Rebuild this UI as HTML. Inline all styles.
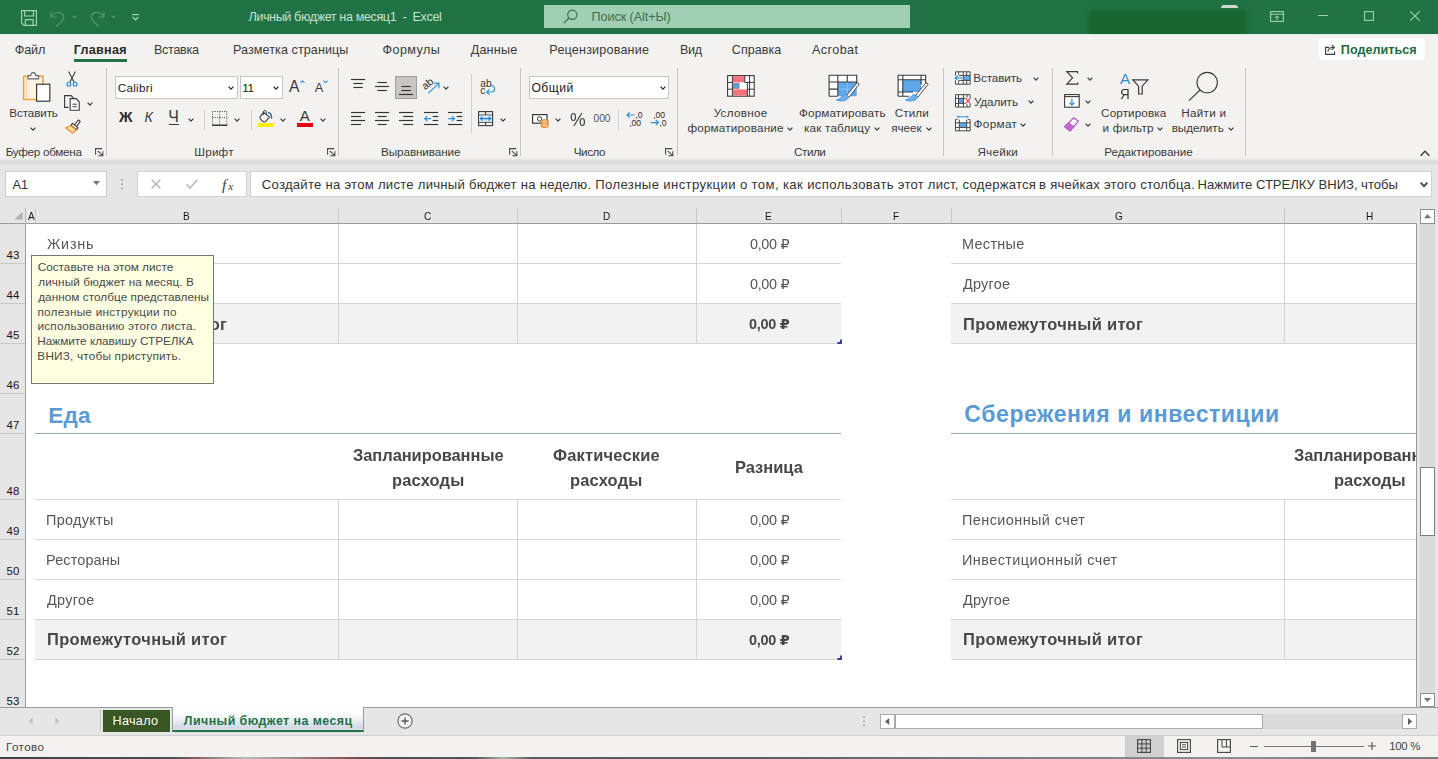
<!DOCTYPE html><html lang="ru"><head><meta charset="utf-8"><title>Личный бюджет на месяц1 - Excel</title><style>
*{box-sizing:border-box;margin:0;padding:0}
html,body{width:1438px;height:759px;overflow:hidden;background:#fff}
body{font-family:"Liberation Sans","DejaVu Sans",sans-serif;color:#3a3a3a}
#app{position:relative;width:1438px;height:759px;overflow:hidden;background:#fff}
.t{position:absolute;white-space:nowrap;line-height:30px;display:block}
.a{position:absolute}
svg{position:absolute;overflow:visible}
.titlebar{left:0;top:0;width:1438px;height:34px;background:#217346;overflow:hidden}
.tline{left:0;top:34px;width:1438px;height:1px;background:#dfece5}
.tabs{left:0;top:34px;width:1438px;height:30px;background:#f3f2f1}
.ribbon{left:0;top:64px;width:1438px;height:96px;background:#f3f2f1}
.rshadow{left:0;top:158px;width:1438px;height:8px;background:linear-gradient(#f0efee,#dcdbda 45%,#e1e1e1 75%,#e6e6e6)}
.fbar{left:0;top:166px;width:1438px;height:40px;background:#e6e6e6}
.box{position:absolute;background:#fff;border:1px solid #c8c6c4}
.vsep{position:absolute;width:1px;background:#c8c6c4}
.colhdr{left:0;top:206px;width:1417px;height:18px;background:#e6e6e6;border-bottom:1px solid #9b9b9b}
.rowhdr{left:0;top:224px;width:26px;height:484px;background:#e6e6e6;border-right:1px solid #9b9b9b}
.grid{left:26px;top:224px;width:1391px;height:483px;background:#fff;overflow:hidden}
.hl{position:absolute;height:1px;background:#d4d4d4}
.vl{position:absolute;width:1px;background:#d4d4d4}
.sub{position:absolute;background:#f2f2f2}
.vscroll{left:1417px;top:206px;width:21px;height:502px;background:#e6e6e6}
.sbtn{position:absolute;background:#fff;border:1px solid #ababab}
.sheettabs{left:0;top:707px;width:1438px;height:29px;background:#e6e6e6;border-top:1px solid #9b9b9b}
.status{left:0;top:735px;width:1438px;height:22px;background:#f3f2f1;border-top:1px solid #d2d0ce}
.bottomstrip{left:0;top:757px;width:1438px;height:2px;background:linear-gradient(90deg,#3c414e,#4a4e58 12%,#8a6a6a 14%,#b9b9b9 17%,#7a4a4a 25%,#4a4f5a 27%,#50555f 33%,#9fb59f 35%,#565b66 37%,#5c606a 55%,#7c7e84 70%,#8e8f93 85%,#77797f)}
</style></head><body><div id="app"><div class="a titlebar"><div class="a" style="left:1089px;top:10px;width:157px;height:30px;background:#17642f;border-radius:3px;filter:blur(2.5px)"></div><div class="a" style="left:1221px;top:5px;width:17px;height:3px;background:#cfd8cf;border-radius:8px 8px 0 0"></div><svg style="left:21.00px;top:10.00px" width="16" height="16" viewBox="0 0 16 16"><path d="M0.6 0.6 H15.4 V15.4 H3 L0.6 13 Z M3.6 0.6 V6 H12.4 V0.6 M4.4 15.4 V9.6 H12 V15.4" fill="none" stroke="#9fd3b4" stroke-width="1.2"/></svg><svg style="left:50.00px;top:10.00px" width="16" height="17" viewBox="0 0 16 17"><path d="M1 1.5 V7 H6.5 M1.5 6.5 C4 2 10 1 13 4.5 C15.5 8 12 12 6 16.5" fill="none" stroke="#4f9a72" stroke-width="1.2"/></svg><svg style="left:71.80px;top:14.70px" width="5.0" height="3.2" viewBox="0 0 5.0 3.2"><path d="M0.6 0.6 L2.50 2.60 L4.40 0.6" fill="none" stroke="#4f9a72" stroke-width="1.10"/></svg><svg style="left:89.00px;top:10.00px" width="16" height="17" viewBox="0 0 16 17"><path d="M15 1.5 V7 H9.5 M14.5 6.5 C12 2 6 1 3 4.5 C0.5 8 4 12 10 16.5" fill="none" stroke="#4f9a72" stroke-width="1.2"/></svg><svg style="left:110.50px;top:14.70px" width="5.0" height="3.2" viewBox="0 0 5.0 3.2"><path d="M0.6 0.6 L2.50 2.60 L4.40 0.6" fill="none" stroke="#4f9a72" stroke-width="1.10"/></svg><svg style="left:132.00px;top:14.00px" width="7" height="7" viewBox="0 0 7 7"><path d="M0 0.6 H7" stroke="#9fd3b4" stroke-width="1.2"/><path d="M0.6 3 L3.5 5.8 L6.4 3" fill="none" stroke="#9fd3b4" stroke-width="1.2"/></svg><span class="t" style="left:248.39px;top:2px;font-size:12.60px;color:#c6e0d1;letter-spacing:-0.388px;white-space:pre;">Личный бюджет на месяц1  -  Excel</span><div class="a" style="left:544px;top:5px;width:366px;height:23px;background:#a0cfb5"></div><svg style="left:563.00px;top:9.00px" width="15" height="15" viewBox="0 0 15 15"><circle cx="9.3" cy="5.7" r="4.6" fill="none" stroke="#3a6e52" stroke-width="1.2"/><path d="M6 9 L0.8 14.2" stroke="#3a6e52" stroke-width="1.2"/></svg><span class="t" style="left:591.48px;top:2px;font-size:12.60px;color:#3a6e52;letter-spacing:-0.057px;">Поиск (Alt+Ы)</span><svg style="left:1269.50px;top:10.50px" width="14" height="11" viewBox="0 0 14 11"><rect x="0.6" y="0.6" width="12.8" height="9.8" fill="none" stroke="#9fd3b4" stroke-width="1.1"/><path d="M0.6 3.2 H13.4 M7 9.2 V5 M4.8 7 L7 4.8 L9.2 7" fill="none" stroke="#9fd3b4" stroke-width="1"/></svg><div class="a" style="left:1318px;top:15px;width:10px;height:1.2px;background:#9fd3b4"></div><svg style="left:1363.50px;top:11.00px" width="10" height="10" viewBox="0 0 10 10"><rect x="0.6" y="0.6" width="8.8" height="8.8" fill="none" stroke="#9fd3b4" stroke-width="1.1"/></svg><svg style="left:1409.50px;top:11.00px" width="10" height="10" viewBox="0 0 10 10"><path d="M0.3 0.3 L9.7 9.7 M9.7 0.3 L0.3 9.7" stroke="#9fd3b4" stroke-width="1.1"/></svg></div><div class="a tabs"></div><span class="t" style="left:14.77px;top:35px;font-size:12.60px;letter-spacing:-0.123px;">Файл</span><span class="t" style="left:73.66px;top:35px;font-size:12.60px;font-weight:700;color:#2b2b2b;letter-spacing:0.301px;">Главная</span><div class="a" style="left:74px;top:59px;width:53px;height:3px;background:#217346"></div><span class="t" style="left:153.97px;top:35px;font-size:12.60px;letter-spacing:-0.296px;">Вставка</span><span class="t" style="left:232.97px;top:35px;font-size:12.60px;letter-spacing:0.072px;">Разметка страницы</span><span class="t" style="left:382.57px;top:35px;font-size:12.60px;letter-spacing:0.398px;">Формулы</span><span class="t" style="left:470.71px;top:35px;font-size:12.60px;letter-spacing:0.190px;">Данные</span><span class="t" style="left:549.37px;top:35px;font-size:12.60px;letter-spacing:0.180px;">Рецензирование</span><span class="t" style="left:679.97px;top:35px;font-size:12.60px;letter-spacing:-0.274px;">Вид</span><span class="t" style="left:731.86px;top:35px;font-size:12.60px;letter-spacing:0.006px;">Справка</span><span class="t" style="left:811.98px;top:35px;font-size:12.61px;letter-spacing:0.441px;">Acrobat</span><div class="a" style="left:1318px;top:38px;width:107px;height:22px;background:#fff;border-radius:3px;box-shadow:0 0 1px #d0d0d0"></div><svg style="left:1325.00px;top:43.50px" width="11.5" height="11" viewBox="0 0 11.5 11"><path d="M4 3.4 H0.6 V10.4 H9.6 V7.4" fill="none" stroke="#3a3a3a" stroke-width="1.1"/><path d="M2.8 7.6 C3.4 4.6 5.6 3.2 8.2 3.2 M6.6 0.8 L9.4 3.2 L6.6 5.8" fill="none" stroke="#3a3a3a" stroke-width="1.1"/></svg><span class="t" style="left:1340.86px;top:35px;font-size:12.60px;font-weight:700;color:#1e6b41;letter-spacing:0.025px;">Поделиться</span><div class="a tline"></div><div class="a ribbon"></div><div class="a rshadow"></div><svg style="left:22.00px;top:71.00px" width="29" height="31" viewBox="0 0 29 31"><path d="M1.6 5.2 H21 V28.6 H1.6 Z" fill="#fdf3e3" stroke="#e9a13b" stroke-width="1.5"/><path d="M3.4 7 H5.6 V26.8 H3.4 Z" fill="#fbdcb0"/><path d="M6 7.9 V4.6 H8.8 C8.8 0.6 13.8 0.6 13.8 4.6 H16.6 V7.9 Z" fill="#f8f8f8" stroke="#666" stroke-width="1.1"/><rect x="14.6" y="13.2" width="13.2" height="17" fill="#fff" stroke="#3a3a3a" stroke-width="1.2"/></svg><span class="t" style="left:9.34px;top:98px;font-size:11.70px;letter-spacing:-0.130px;">Вставить</span><svg style="left:30.00px;top:126.70px" width="6.0" height="3.8" viewBox="0 0 6.0 3.8"><path d="M0.6 0.6 L3.00 3.20 L5.40 0.6" fill="none" stroke="#3a3a3a" stroke-width="1.20"/></svg><svg style="left:66.00px;top:71.00px" width="12" height="16" viewBox="0 0 12 16"><path d="M2.6 0.5 L8.2 11.5 M9.4 0.5 L3.8 11.5" fill="none" stroke="#3a3a3a" stroke-width="1.1"/><circle cx="2.9" cy="13.2" r="1.9" fill="none" stroke="#2f8fd8" stroke-width="1.2"/><circle cx="9.1" cy="13.2" r="1.9" fill="none" stroke="#2f8fd8" stroke-width="1.2"/></svg><svg style="left:64.00px;top:95.00px" width="16" height="16" viewBox="0 0 16 16"><path d="M4.6 12.4 H0.6 V0.6 H7 L9.6 3.2" fill="none" stroke="#3a3a3a" stroke-width="1.1"/><path d="M6.2 3.6 H12 L15.2 6.8 V15.2 H6.2 Z" fill="#fff" stroke="#3a3a3a" stroke-width="1.1"/><path d="M8.6 9.2 H12.8 M8.6 11.8 H12.8" stroke="#3a3a3a" stroke-width="1"/></svg><svg style="left:86.50px;top:101.70px" width="6.0" height="3.8" viewBox="0 0 6.0 3.8"><path d="M0.6 0.6 L3.00 3.20 L5.40 0.6" fill="none" stroke="#3a3a3a" stroke-width="1.20"/></svg><svg style="left:64.50px;top:119.00px" width="16" height="15" viewBox="0 0 16 15"><path d="M9.5 6.2 L13.4 1 L15.2 2.4 L11.6 7.8" fill="#fff" stroke="#3a3a3a" stroke-width="1.1"/><path d="M7.4 4.4 L13 8.6 L11.6 10.6 L6 6.4 Z" fill="#f8f8f8" stroke="#3a3a3a" stroke-width="1.1"/><path d="M5.4 6.6 L11.2 11 L7.6 14.2 L0.8 8.8 Z" fill="#fbd9a5" stroke="#e8912d" stroke-width="1.2"/></svg><span class="t" style="left:5.74px;top:137px;font-size:11.70px;letter-spacing:-0.287px;">Буфер обмена</span><svg style="left:94.60px;top:147.80px" width="9" height="9" viewBox="0 0 9 9"><path d="M0.6 6.8 V0.6 H7.2" fill="none" stroke="#4a4a4a" stroke-width="1.1"/><path d="M2.8 2.8 L7.6 7.6 M7.8 3.2 V7.8 H3.2" fill="none" stroke="#4a4a4a" stroke-width="1.1"/></svg><div class="vsep" style="left:106.0px;top:68px;height:88px"></div><div class="box" style="left:115px;top:76px;width:123px;height:23px"></div><span class="t" style="left:117.71px;top:73px;font-size:11.70px;color:#222;letter-spacing:0.276px;">Calibri</span><svg style="left:228.00px;top:86.40px" width="6.0" height="3.8" viewBox="0 0 6.0 3.8"><path d="M0.6 0.6 L3.00 3.20 L5.40 0.6" fill="none" stroke="#222" stroke-width="1.20"/></svg><div class="box" style="left:240px;top:76px;width:43px;height:23px"></div><span class="t" style="left:242.30px;top:73px;font-size:11.80px;color:#222;letter-spacing:-0.6px;">11</span><svg style="left:273.00px;top:86.40px" width="6.0" height="3.8" viewBox="0 0 6.0 3.8"><path d="M0.6 0.6 L3.00 3.20 L5.40 0.6" fill="none" stroke="#222" stroke-width="1.20"/></svg><span class="t" style="left:288.97px;top:72px;font-size:15.75px;letter-spacing:-0.454px;">A</span><svg style="left:299.50px;top:80.00px" width="5" height="3.5" viewBox="0 0 5 3.5"><path d="M0.5 3 L2.5 0.8 L4.5 3" fill="none" stroke="#2f8fd8" stroke-width="1.1"/></svg><span class="t" style="left:314.68px;top:73px;font-size:12.74px;letter-spacing:-0.450px;">A</span><svg style="left:323.00px;top:80.00px" width="5" height="3.5" viewBox="0 0 5 3.5"><path d="M0.5 0.6 L2.5 2.8 L4.5 0.6" fill="none" stroke="#2f8fd8" stroke-width="1.1"/></svg><span class="t" style="left:119.04px;top:102px;font-size:14.87px;font-weight:700;color:#2b2b2b;letter-spacing:0.446px;">Ж</span><span class="t" style="left:144.57px;top:102px;font-size:14.12px;font-style:italic;letter-spacing:0.451px;">К</span><span class="t" style="left:168.26px;top:102px;font-size:15.88px;letter-spacing:0.442px;">Ч</span><div class="a" style="left:169px;top:124px;width:10px;height:1.2px;background:#3a3a3a"></div><svg style="left:188.00px;top:117.70px" width="6.0" height="3.8" viewBox="0 0 6.0 3.8"><path d="M0.6 0.6 L3.00 3.20 L5.40 0.6" fill="none" stroke="#3a3a3a" stroke-width="1.20"/></svg><div class="vsep" style="left:204.0px;top:110px;height:20px;background:#d2d0ce"></div><svg style="left:211.50px;top:111.00px" width="16" height="16" viewBox="0 0 16 16"><path d="M0.5 0.5 H14.8 M0.5 6.6 H14.8 M0.5 0.5 V12.8 M7.6 0.5 V12.8 M14.8 0.5 V12.8" fill="none" stroke="#4a4a4a" stroke-width="1" stroke-dasharray="1 1.3"/><path d="M0 14.2 H15.4" stroke="#1a1a1a" stroke-width="1.3"/></svg><svg style="left:234.00px;top:117.70px" width="6.0" height="3.8" viewBox="0 0 6.0 3.8"><path d="M0.6 0.6 L3.00 3.20 L5.40 0.6" fill="none" stroke="#3a3a3a" stroke-width="1.20"/></svg><div class="vsep" style="left:250.5px;top:110px;height:20px;background:#d2d0ce"></div><svg style="left:259.00px;top:109.50px" width="15" height="13" viewBox="0 0 15 13"><path d="M4.6 2.4 L10.4 7 L6.6 11.4 C5.8 12.2 4.8 12.2 4 11.4 L1.4 8.8 C0.8 8 0.8 7.2 1.4 6.4 Z" fill="#fff" stroke="#3a3a3a" stroke-width="1.1"/><path d="M4.4 5 V1.8 C4.4 0 7.2 0 7.2 1.8 V4.4" fill="none" stroke="#3a3a3a" stroke-width="1"/><path d="M9 2.6 C11.8 3 13 5.4 12.4 8.6" fill="none" stroke="#1f6fb5" stroke-width="1.5"/></svg><div class="a" style="left:257.5px;top:122.5px;width:16.5px;height:4.5px;background:#ffed00"></div><svg style="left:280.00px;top:117.70px" width="6.0" height="3.8" viewBox="0 0 6.0 3.8"><path d="M0.6 0.6 L3.00 3.20 L5.40 0.6" fill="none" stroke="#3a3a3a" stroke-width="1.20"/></svg><span class="t" style="left:299.77px;top:101px;font-size:15.01px;letter-spacing:0.443px;">A</span><div class="a" style="left:296.7px;top:122.5px;width:16.5px;height:4.5px;background:#e3000f"></div><svg style="left:319.50px;top:117.70px" width="6.0" height="3.8" viewBox="0 0 6.0 3.8"><path d="M0.6 0.6 L3.00 3.20 L5.40 0.6" fill="none" stroke="#3a3a3a" stroke-width="1.20"/></svg><span class="t" style="left:194.34px;top:137px;font-size:11.70px;letter-spacing:0.177px;">Шрифт</span><svg style="left:326.70px;top:147.80px" width="9" height="9" viewBox="0 0 9 9"><path d="M0.6 6.8 V0.6 H7.2" fill="none" stroke="#4a4a4a" stroke-width="1.1"/><path d="M2.8 2.8 L7.6 7.6 M7.8 3.2 V7.8 H3.2" fill="none" stroke="#4a4a4a" stroke-width="1.1"/></svg><div class="vsep" style="left:338.0px;top:68px;height:88px"></div><svg style="left:350.90px;top:70.00px" width="16" height="60" viewBox="0 0 16 60"><path d="M0.0 9.50 H14.2" stroke="#333" stroke-width="1.15"/><path d="M2.4 13.50 H11.8" stroke="#333" stroke-width="1.15"/><path d="M2.4 17.50 H11.8" stroke="#333" stroke-width="1.15"/></svg><svg style="left:374.90px;top:70.00px" width="16" height="60" viewBox="0 0 16 60"><path d="M2.4 12.50 H11.8" stroke="#333" stroke-width="1.15"/><path d="M0.0 16.50 H14.2" stroke="#333" stroke-width="1.15"/><path d="M2.4 20.50 H11.8" stroke="#333" stroke-width="1.15"/></svg><div class="a" style="left:395px;top:76px;width:22px;height:23px;background:#c8c6c4;border:1px solid #a19f9d"></div><svg style="left:398.90px;top:70.00px" width="16" height="60" viewBox="0 0 16 60"><path d="M2.4 16.50 H11.8" stroke="#333" stroke-width="1.15"/><path d="M2.4 20.50 H11.8" stroke="#333" stroke-width="1.15"/><path d="M0.0 24.50 H14.2" stroke="#333" stroke-width="1.15"/></svg><svg style="left:422.00px;top:78.00px" width="19" height="17" viewBox="0 0 19 17"><text x="1.6" y="10.4" font-size="10.6" fill="#333" transform="rotate(-40 5 9)" font-family='Liberation Sans,DejaVu Sans,sans-serif'>ab</text><path d="M6.3 15.4 L16.6 5.4 M12 5.1 H16.9 V10.2" fill="none" stroke="#2f8fd8" stroke-width="1.2"/></svg><svg style="left:443.00px;top:86.40px" width="6.0" height="3.8" viewBox="0 0 6.0 3.8"><path d="M0.6 0.6 L3.00 3.20 L5.40 0.6" fill="none" stroke="#3a3a3a" stroke-width="1.20"/></svg><svg style="left:350.90px;top:70.00px" width="16" height="60" viewBox="0 0 16 60"><path d="M0.0 42.50 H14.2" stroke="#333" stroke-width="1.15"/><path d="M0.0 46.50 H10.0" stroke="#333" stroke-width="1.15"/><path d="M0.0 50.50 H14.2" stroke="#333" stroke-width="1.15"/><path d="M0.0 54.50 H10.0" stroke="#333" stroke-width="1.15"/></svg><svg style="left:374.90px;top:70.00px" width="16" height="60" viewBox="0 0 16 60"><path d="M0.0 42.50 H14.2" stroke="#333" stroke-width="1.15"/><path d="M2.6 46.50 H11.6" stroke="#333" stroke-width="1.15"/><path d="M0.0 50.50 H14.2" stroke="#333" stroke-width="1.15"/><path d="M2.6 54.50 H11.6" stroke="#333" stroke-width="1.15"/></svg><svg style="left:398.90px;top:70.00px" width="16" height="60" viewBox="0 0 16 60"><path d="M0.0 42.50 H14.2" stroke="#333" stroke-width="1.15"/><path d="M4.2 46.50 H14.2" stroke="#333" stroke-width="1.15"/><path d="M0.0 50.50 H14.2" stroke="#333" stroke-width="1.15"/><path d="M4.2 54.50 H14.2" stroke="#333" stroke-width="1.15"/></svg><svg style="left:423.90px;top:70.00px" width="16" height="60" viewBox="0 0 16 60"><path d="M0.0 42.50 H14.2" stroke="#333" stroke-width="1.15"/><path d="M8.6 46.50 H14.2" stroke="#333" stroke-width="1.15"/><path d="M8.6 50.50 H14.2" stroke="#333" stroke-width="1.15"/><path d="M0.0 54.50 H14.2" stroke="#333" stroke-width="1.15"/></svg><svg style="left:423.90px;top:115.00px" width="8" height="8" viewBox="0 0 8 8"><path d="M7 3.7 H0.9 M3.3 1.2 L0.8 3.7 L3.3 6.2" fill="none" stroke="#2f8fd8" stroke-width="1.2"/></svg><svg style="left:448.10px;top:70.00px" width="16" height="60" viewBox="0 0 16 60"><path d="M0.0 42.50 H14.2" stroke="#333" stroke-width="1.15"/><path d="M8.6 46.50 H14.2" stroke="#333" stroke-width="1.15"/><path d="M8.6 50.50 H14.2" stroke="#333" stroke-width="1.15"/><path d="M0.0 54.50 H14.2" stroke="#333" stroke-width="1.15"/></svg><svg style="left:448.10px;top:115.00px" width="8" height="8" viewBox="0 0 8 8"><path d="M0.2 3.7 H6.3 M3.9 1.2 L6.4 3.7 L3.9 6.2" fill="none" stroke="#2f8fd8" stroke-width="1.2"/></svg><div class="vsep" style="left:470.5px;top:74px;height:59px;background:#d2d0ce"></div><svg style="left:479.50px;top:79.00px" width="16" height="17" viewBox="0 0 16 17"><text x="0.3" y="7.8" font-size="10.2" fill="#333" font-family='Liberation Sans,DejaVu Sans,sans-serif'>ab</text><text x="0.3" y="15.4" font-size="10.2" fill="#333" font-family='Liberation Sans,DejaVu Sans,sans-serif'>c</text><path d="M11 6.5 C15.8 6.5 15.8 13 11 13 H7 M9.4 10.4 L6.8 13 L9.4 15.6" fill="none" stroke="#2f8fd8" stroke-width="1.2"/></svg><svg style="left:478.00px;top:111.00px" width="16" height="16" viewBox="0 0 16 16"><rect x="0.6" y="0.6" width="14" height="14" fill="none" stroke="#3a3a3a" stroke-width="1.1"/><path d="M0.6 4 H14.6 M0.6 11.2 H14.6 M7.6 0.6 V4 M7.6 11.2 V14.6" stroke="#3a3a3a" stroke-width="1.1"/><rect x="1.2" y="4.6" width="12.8" height="6" fill="#d6ebfb"/><path d="M2.6 7.6 H12.6 M4.6 5.6 L2.4 7.6 L4.6 9.6 M10.6 5.6 L12.8 7.6 L10.6 9.6" fill="none" stroke="#1f7fd0" stroke-width="1.1"/></svg><svg style="left:500.00px;top:117.70px" width="6.0" height="3.8" viewBox="0 0 6.0 3.8"><path d="M0.6 0.6 L3.00 3.20 L5.40 0.6" fill="none" stroke="#3a3a3a" stroke-width="1.20"/></svg><span class="t" style="left:381.04px;top:137px;font-size:11.70px;letter-spacing:-0.088px;">Выравнивание</span><svg style="left:508.70px;top:147.80px" width="9" height="9" viewBox="0 0 9 9"><path d="M0.6 6.8 V0.6 H7.2" fill="none" stroke="#4a4a4a" stroke-width="1.1"/><path d="M2.8 2.8 L7.6 7.6 M7.8 3.2 V7.8 H3.2" fill="none" stroke="#4a4a4a" stroke-width="1.1"/></svg><div class="vsep" style="left:520.3px;top:68px;height:88px"></div><div class="box" style="left:528.5px;top:76px;width:140.5px;height:23px"></div><span class="t" style="left:531.42px;top:73px;font-size:12.21px;color:#222;letter-spacing:0.442px;">Общий</span><svg style="left:659.50px;top:86.40px" width="6.0" height="3.8" viewBox="0 0 6.0 3.8"><path d="M0.6 0.6 L3.00 3.20 L5.40 0.6" fill="none" stroke="#222" stroke-width="1.20"/></svg><svg style="left:531.50px;top:113.50px" width="17" height="14" viewBox="0 0 17 14"><rect x="0.6" y="0.6" width="14.4" height="8.6" fill="#fff" stroke="#3a3a3a" stroke-width="1.2"/><circle cx="7.6" cy="4.9" r="2.2" fill="none" stroke="#3a3a3a" stroke-width="1"/><path d="M9.2 7.4 V12 C9.2 13.8 16 13.8 16 12 V7.4" fill="#fde3c0" stroke="#e8812d" stroke-width="1.1"/><ellipse cx="12.6" cy="7.4" rx="3.4" ry="1.5" fill="#fde3c0" stroke="#e8812d" stroke-width="1.1"/><path d="M9.2 9.8 C9.2 11.4 16 11.4 16 9.8" fill="none" stroke="#e8812d" stroke-width="1"/></svg><svg style="left:554.50px;top:117.70px" width="6.0" height="3.8" viewBox="0 0 6.0 3.8"><path d="M0.6 0.6 L3.00 3.20 L5.40 0.6" fill="none" stroke="#3a3a3a" stroke-width="1.20"/></svg><span class="t" style="left:569.92px;top:105px;font-size:19.00px;color:#444;transform:scaleX(0.93);transform-origin:0 0;">%</span><span class="t" style="left:593.60px;top:104px;font-size:10.20px;color:#555;letter-spacing:-0.102px;">000</span><div class="vsep" style="left:618.0px;top:110px;height:20px;background:#d2d0ce"></div><svg style="left:625.50px;top:111.00px" width="16" height="16" viewBox="0 0 16 16"><path d="M1 4 H8.4 M3.6 1.4 L1 4 L3.6 6.6" fill="none" stroke="#2f8fd8" stroke-width="1.2"/><text x="9.3" y="7" font-size="8.6" fill="#2a2a2a" font-family='Liberation Sans,DejaVu Sans,sans-serif'>,0</text><text x="3.2" y="15" font-size="8.6" fill="#2a2a2a" font-family='Liberation Sans,DejaVu Sans,sans-serif'>,00</text></svg><svg style="left:649.50px;top:111.00px" width="16" height="16" viewBox="0 0 16 16"><text x="3.2" y="7" font-size="8.6" fill="#2a2a2a" font-family='Liberation Sans,DejaVu Sans,sans-serif'>,00</text><path d="M0.6 11.6 H8.4 M5.8 9 L8.4 11.6 L5.8 14.2" fill="none" stroke="#2f8fd8" stroke-width="1.2"/><text x="9.3" y="15" font-size="8.6" fill="#2a2a2a" font-family='Liberation Sans,DejaVu Sans,sans-serif'>,0</text></svg><span class="t" style="left:573.79px;top:137px;font-size:11.70px;letter-spacing:-0.480px;">Число</span><svg style="left:665.00px;top:147.80px" width="9" height="9" viewBox="0 0 9 9"><path d="M0.6 6.8 V0.6 H7.2" fill="none" stroke="#4a4a4a" stroke-width="1.1"/><path d="M2.8 2.8 L7.6 7.6 M7.8 3.2 V7.8 H3.2" fill="none" stroke="#4a4a4a" stroke-width="1.1"/></svg><div class="vsep" style="left:676.7px;top:68px;height:88px"></div><svg style="left:727.00px;top:75.00px" width="28" height="22" viewBox="0 0 28 22"><rect x="0.6" y="0.6" width="26.6" height="20.6" fill="#fff" stroke="#3a3a3a" stroke-width="1.1"/><rect x="5.6" y="1.2" width="12" height="6" fill="#f8727f"/><rect x="5.6" y="7.6" width="7" height="6.4" fill="#f8727f"/><rect x="5.6" y="14.4" width="14.6" height="6.2" fill="#f8727f"/><rect x="6.2" y="8.2" width="5.8" height="5.2" fill="#5b9bd5"/><path d="M5.4 0.6 V21.2 M17.8 0.6 V7.4 M20.4 7.4 V21.2 M22.6 0.6 V21.2 M0.6 7.4 H5.4 M17.8 7.4 H27.2 M0.6 14.2 H5.4 M20.4 14.2 H27.2" stroke="#3a3a3a" stroke-width="1"/></svg><span class="t" style="left:713.69px;top:98px;font-size:11.70px;letter-spacing:0.275px;">Условное</span><span class="t" style="left:687.51px;top:113px;font-size:11.70px;letter-spacing:0.167px;">форматирование</span><svg style="left:786.50px;top:126.70px" width="6.0" height="3.8" viewBox="0 0 6.0 3.8"><path d="M0.6 0.6 L3.00 3.20 L5.40 0.6" fill="none" stroke="#3a3a3a" stroke-width="1.20"/></svg><svg style="left:828.00px;top:74.00px" width="33" height="29" viewBox="0 0 33 29"><path d="M1.1 1.2 H28.7 V11 L19 22.3 H1.1 Z" fill="#fff"/><rect x="9.9" y="8" width="18.8" height="14.2" fill="#5ea8ea"/><path d="M10 15.1 H28.6 M19.3 8 V22.2" stroke="#8cc2f2" stroke-width="1"/><path d="M1.1 22.3 V1.2 H28.7 V10.5 M1.1 22.3 H9.5 M1.1 8 H28.7 M1.1 15.1 H9.8 M9.8 1.2 V22.3 M19.3 1.2 V8" fill="none" stroke="#3a3a3a" stroke-width="1.1"/><path d="M29.2 8.6 L31.2 10.2 L20.6 23.6 L18.2 21.8 Z" fill="#fafafa" stroke="#4a4a4a" stroke-width="1"/><path d="M17.6 20.6 C14.4 20.2 14.0 24.6 8.4 26.0 C12.4 27.8 19.6 27.2 20.6 23.0 C20.2 21.8 18.8 20.8 17.6 20.6 Z" fill="#6fb1ee" stroke="#3f94e0" stroke-width="0.9"/></svg><span class="t" style="left:799.03px;top:98px;font-size:11.70px;letter-spacing:0.137px;">Форматировать</span><span class="t" style="left:803.91px;top:113px;font-size:11.70px;letter-spacing:0.210px;">как таблицу</span><svg style="left:873.70px;top:126.70px" width="6.0" height="3.8" viewBox="0 0 6.0 3.8"><path d="M0.6 0.6 L3.00 3.20 L5.40 0.6" fill="none" stroke="#3a3a3a" stroke-width="1.20"/></svg><svg style="left:897.00px;top:74.00px" width="33" height="29" viewBox="0 0 33 29"><path d="M1.1 1.2 H28.6 V11 L19 22.3 H1.1 Z" fill="#fff"/><rect x="5.8" y="5.8" width="18.2" height="12.2" fill="#5ea8ea"/><path d="M1.1 22.3 V1.2 H28.6 V10.5 M1.1 22.3 H12 M1.1 5.7 H28.6 M1.1 18 H16 M5.8 1.2 V22.3 M24.1 1.2 V10.5" fill="none" stroke="#3a3a3a" stroke-width="1.1"/><path d="M29.2 8.6 L31.2 10.2 L20.6 23.6 L18.2 21.8 Z" fill="#fafafa" stroke="#4a4a4a" stroke-width="1"/><path d="M17.6 20.6 C14.4 20.2 14.0 24.6 8.4 26.0 C12.4 27.8 19.6 27.2 20.6 23.0 C20.2 21.8 18.8 20.8 17.6 20.6 Z" fill="#6fb1ee" stroke="#3f94e0" stroke-width="0.9"/></svg><span class="t" style="left:894.71px;top:98px;font-size:11.70px;letter-spacing:0.108px;">Стили</span><span class="t" style="left:891.20px;top:113px;font-size:11.70px;letter-spacing:-0.027px;">ячеек</span><svg style="left:925.50px;top:126.70px" width="6.0" height="3.8" viewBox="0 0 6.0 3.8"><path d="M0.6 0.6 L3.00 3.20 L5.40 0.6" fill="none" stroke="#3a3a3a" stroke-width="1.20"/></svg><span class="t" style="left:794.11px;top:137px;font-size:11.70px;letter-spacing:-0.492px;">Стили</span><div class="vsep" style="left:943.3px;top:68px;height:88px"></div><svg style="left:954.00px;top:70.00px" width="18" height="16" viewBox="0 0 18 16"><rect x="1.5" y="1.8" width="14.6" height="12.4" fill="#fff"/><rect x="9.3" y="5.6" width="6.8" height="4.6" fill="#5ea8ea"/><path d="M1.5 5.4 V1.8 H16.1 V14.2 H1.5 V10.4 M4.6 1.8 V4.6 M4.6 11 V14.2 M9.2 1.8 V14.2 M12.7 1.8 V5.4 M12.7 10.4 V14.2 M4.6 5.4 H16.1 M4.6 10.4 H16.1" fill="none" stroke="#454545" stroke-width="1"/><path d="M1.2 7.9 H8 M3.6 5.5 L1.2 7.9 L3.6 10.3" fill="none" stroke="#2f8fd8" stroke-width="1.2"/></svg><span class="t" style="left:973.24px;top:63px;font-size:11.70px;letter-spacing:-0.087px;">Вставить</span><svg style="left:1032.50px;top:76.70px" width="6.0" height="3.8" viewBox="0 0 6.0 3.8"><path d="M0.6 0.6 L3.00 3.20 L5.40 0.6" fill="none" stroke="#3a3a3a" stroke-width="1.20"/></svg><svg style="left:954.00px;top:93.00px" width="18" height="16" viewBox="0 0 18 16"><rect x="1.5" y="1.7" width="14.6" height="12.3" fill="#fff"/><rect x="4.6" y="5.6" width="4.8" height="4.6" fill="#5ea8ea"/><path d="M16.1 5 V1.7 H1.5 V14 H16.1 V10.8 M4.5 1.7 V14 M9.4 1.7 V14 M13 1.7 V4.6 M13 11.2 V14 M1.5 5.4 H11 M1.5 10.4 H11" fill="none" stroke="#454545" stroke-width="1"/><path d="M11.4 5.2 L16.4 10.6 M16.4 5.2 L11.4 10.6" stroke="#e8404f" stroke-width="1.2"/></svg><span class="t" style="left:973.89px;top:87px;font-size:11.70px;letter-spacing:-0.088px;">Удалить</span><svg style="left:1028.00px;top:99.70px" width="6.0" height="3.8" viewBox="0 0 6.0 3.8"><path d="M0.6 0.6 L3.00 3.20 L5.40 0.6" fill="none" stroke="#3a3a3a" stroke-width="1.20"/></svg><svg style="left:954.00px;top:115.00px" width="18" height="17" viewBox="0 0 18 17"><path d="M3.8 1.8 H13.8 M3.8 0.4 V3.2 M13.8 0.4 V3.2" stroke="#2f8fd8" stroke-width="1"/><rect x="1.5" y="4.6" width="14.6" height="11.2" fill="#fff"/><rect x="5.4" y="7.9" width="7.2" height="4.4" fill="#5ea8ea"/><path d="M3.4 4.6 H1.5 V15.8 H16.1 V4.6 H14.2 M5.3 4.6 V15.8 M12.7 4.6 V15.8 M1.5 7.8 H16.1 M1.5 12.4 H16.1" fill="none" stroke="#454545" stroke-width="1"/></svg><span class="t" style="left:973.53px;top:109px;font-size:11.70px;letter-spacing:0.369px;">Формат</span><svg style="left:1020.30px;top:122.70px" width="6.0" height="3.8" viewBox="0 0 6.0 3.8"><path d="M0.6 0.6 L3.00 3.20 L5.40 0.6" fill="none" stroke="#3a3a3a" stroke-width="1.20"/></svg><span class="t" style="left:977.45px;top:137px;font-size:11.70px;letter-spacing:0.231px;">Ячейки</span><div class="vsep" style="left:1052.0px;top:68px;height:88px"></div><svg style="left:1066.00px;top:71.00px" width="13" height="14" viewBox="0 0 13 14"><path d="M11.6 2.4 V0.6 H0.8 L6.6 6.8 L0.8 13.2 H11.8 V11.4" fill="none" stroke="#3a3a3a" stroke-width="1.2"/></svg><svg style="left:1086.50px;top:76.70px" width="6.0" height="3.8" viewBox="0 0 6.0 3.8"><path d="M0.6 0.6 L3.00 3.20 L5.40 0.6" fill="none" stroke="#3a3a3a" stroke-width="1.20"/></svg><svg style="left:1064.00px;top:94.00px" width="16" height="14" viewBox="0 0 16 14"><rect x="0.6" y="0.6" width="14.6" height="12.6" fill="#fff" stroke="#3a3a3a" stroke-width="1.1"/><path d="M0.6 2.6 H15.2" stroke="#3a3a3a" stroke-width="1.1"/><path d="M7.9 4.4 V11 M5.4 8.6 L7.9 11.2 L10.4 8.6" fill="none" stroke="#2f8fd8" stroke-width="1.2"/></svg><svg style="left:1084.50px;top:99.70px" width="6.0" height="3.8" viewBox="0 0 6.0 3.8"><path d="M0.6 0.6 L3.00 3.20 L5.40 0.6" fill="none" stroke="#3a3a3a" stroke-width="1.20"/></svg><svg style="left:1064.00px;top:116.50px" width="16" height="15" viewBox="0 0 16 15"><path d="M9.6 0.8 L14.4 4.2 L6.2 14 L0.8 10 Z" fill="#fff" stroke="#b14fc5" stroke-width="1.2"/><path d="M4.2 5.6 L9.8 9.6 L6.2 14 L0.8 10 Z" fill="#c76bd8" stroke="#b14fc5" stroke-width="1"/></svg><svg style="left:1084.50px;top:122.70px" width="6.0" height="3.8" viewBox="0 0 6.0 3.8"><path d="M0.6 0.6 L3.00 3.20 L5.40 0.6" fill="none" stroke="#3a3a3a" stroke-width="1.20"/></svg><span class="t" style="left:1119.97px;top:64px;font-size:15.30px;color:#2f8fd8;">A</span><span class="t" style="left:1119.97px;top:79px;font-size:14.20px;transform:scaleX(0.950);transform-origin:0 0;">Я</span><svg style="left:1131.50px;top:79.00px" width="17" height="16" viewBox="0 0 17 16"><path d="M0.8 0.8 H15.8 L10.2 7.2 V15 H6.6 V7.2 Z" fill="none" stroke="#3a3a3a" stroke-width="1.2"/></svg><span class="t" style="left:1101.11px;top:98px;font-size:11.70px;letter-spacing:0.115px;">Сортировка</span><span class="t" style="left:1102.59px;top:113px;font-size:11.70px;letter-spacing:0.160px;">и фильтр</span><svg style="left:1157.00px;top:126.70px" width="6.0" height="3.8" viewBox="0 0 6.0 3.8"><path d="M0.6 0.6 L3.00 3.20 L5.40 0.6" fill="none" stroke="#3a3a3a" stroke-width="1.20"/></svg><svg style="left:1188.00px;top:71.00px" width="31" height="31" viewBox="0 0 31 31"><circle cx="19.2" cy="11.6" r="10.2" fill="none" stroke="#3a3a3a" stroke-width="1.1"/><path d="M12 19 L1 29.6" stroke="#3a3a3a" stroke-width="1.1"/></svg><span class="t" style="left:1181.24px;top:98px;font-size:11.70px;letter-spacing:0.288px;">Найти и</span><span class="t" style="left:1171.69px;top:113px;font-size:11.70px;letter-spacing:-0.036px;">выделить</span><svg style="left:1227.50px;top:126.70px" width="6.0" height="3.8" viewBox="0 0 6.0 3.8"><path d="M0.6 0.6 L3.00 3.20 L5.40 0.6" fill="none" stroke="#3a3a3a" stroke-width="1.20"/></svg><span class="t" style="left:1104.34px;top:137px;font-size:11.70px;letter-spacing:-0.050px;">Редактирование</span><div class="vsep" style="left:1245.0px;top:68px;height:88px"></div><svg style="left:1419.80px;top:150.30px" width="10" height="7" viewBox="0 0 10 7"><path d="M0.6 5.8 L5 1.2 L9.4 5.8" fill="none" stroke="#3a3a3a" stroke-width="1.3"/></svg><div class="a fbar"></div><div class="box" style="left:5px;top:171px;width:102px;height:26px;border-color:#d0d0d0"></div><span class="t" style="left:12.47px;top:170px;font-size:12.80px;color:#333;letter-spacing:-0.006px;">A1</span><svg style="left:93.00px;top:181.00px" width="7" height="4.4" viewBox="0 0 7 4.4"><path d="M0 0 H7 L3.5 4.2 Z" fill="#777"/></svg><svg style="left:121.30px;top:178.60px" width="2" height="11" viewBox="0 0 2 11"><circle cx="1" cy="1" r="0.9" fill="#9a9a9a"/><circle cx="1" cy="5.2" r="0.9" fill="#9a9a9a"/><circle cx="1" cy="9.4" r="0.9" fill="#9a9a9a"/></svg><div class="box" style="left:137px;top:171px;width:109.5px;height:26px;border-color:#d0d0d0"></div><svg style="left:151.00px;top:179.00px" width="10" height="10" viewBox="0 0 10 10"><path d="M0.6 0.6 L9.4 9.4 M9.4 0.6 L0.6 9.4" stroke="#bdbdbd" stroke-width="1.6"/></svg><svg style="left:186.00px;top:179.00px" width="12" height="10" viewBox="0 0 12 10"><path d="M0.6 5.4 L4 9 L11.4 0.8" fill="none" stroke="#bdbdbd" stroke-width="1.7"/></svg><span class="t" style="left:222.03px;top:170px;font-size:15.50px;color:#3d3d3d;font-style:italic;font-family:'Liberation Serif',serif;">f</span><span class="t" style="left:228.13px;top:171px;font-size:11.00px;color:#3d3d3d;font-style:italic;font-family:'Liberation Serif',serif;">x</span><div class="box" style="left:250px;top:171px;width:1182px;height:26px;border-color:#d0d0d0"></div><span class="t" style="left:261.83px;top:170px;font-size:13.10px;color:#333;letter-spacing:0.263px;">Создайте на этом листе личный бюджет на неделю.</span> <span class="t" style="left:595.24px;top:170px;font-size:13.10px;color:#333;letter-spacing:0.389px;">Полезные инструкции о том, как использовать</span> <span class="t" style="left:897.75px;top:170px;font-size:13.10px;color:#333;letter-spacing:0.242px;">этот лист, содержатся</span> <span class="t" style="left:1039.09px;top:170px;font-size:13.10px;color:#333;letter-spacing:0.227px;">в ячейках этого столбца.</span> <span class="t" style="left:1197.53px;top:170px;font-size:13.10px;color:#333;letter-spacing:-0.026px;">Нажмите СТРЕЛКУ ВНИЗ, чтобы</span> <svg style="left:1420.40px;top:181.50px" width="8.0" height="4.8" viewBox="0 0 8.0 4.8"><path d="M0.6 0.6 L4.00 4.20 L7.40 0.6" fill="none" stroke="#444" stroke-width="1.70"/></svg><div class="a colhdr"></div><div class="a rowhdr"></div><div class="a vscroll"></div><div class="vl" style="left:25px;top:208px;height:16px;background:#b5b5b5"></div><svg style="left:13.50px;top:211.00px" width="9" height="9" viewBox="0 0 9 9"><path d="M8.6 0.4 V8.6 H0.4 Z" fill="#b1b1b1"/></svg><span class="t" style="left:27.88px;top:201px;font-size:11.40px;transform:scaleX(0.880);transform-origin:0 0;color:#151515;">A</span><div class="vl" style="left:35.0px;top:208px;height:15px;background:#c9c9c9"></div><span class="t" style="left:183.23px;top:201px;font-size:11.40px;transform:scaleX(0.880);transform-origin:0 0;color:#151515;">B</span><div class="vl" style="left:337.5px;top:208px;height:15px;background:#c9c9c9"></div><span class="t" style="left:424.29px;top:201px;font-size:11.40px;transform:scaleX(0.880);transform-origin:0 0;color:#151515;">C</span><div class="vl" style="left:516.5px;top:208px;height:15px;background:#c9c9c9"></div><span class="t" style="left:602.98px;top:201px;font-size:11.40px;transform:scaleX(0.880);transform-origin:0 0;color:#151515;">D</span><div class="vl" style="left:695.5px;top:208px;height:15px;background:#c9c9c9"></div><span class="t" style="left:765.23px;top:201px;font-size:11.40px;transform:scaleX(0.880);transform-origin:0 0;color:#151515;">E</span><div class="vl" style="left:841.0px;top:208px;height:15px;background:#c9c9c9"></div><span class="t" style="left:892.73px;top:201px;font-size:11.40px;transform:scaleX(0.880);transform-origin:0 0;color:#151515;">F</span><div class="vl" style="left:950.5px;top:208px;height:15px;background:#c9c9c9"></div><span class="t" style="left:1114.55px;top:201px;font-size:11.40px;transform:scaleX(0.880);transform-origin:0 0;color:#151515;">G</span><div class="vl" style="left:1284.0px;top:208px;height:15px;background:#c9c9c9"></div><span class="t" style="left:1365.58px;top:201px;font-size:11.40px;transform:scaleX(0.880);transform-origin:0 0;color:#151515;">H</span><span class="t nolsb" style="left:6.60px;top:240px;font-size:11.40px;color:#151515;">43</span><div class="hl" style="left:0;top:262.5px;width:25px;background:#c9c9c9"></div><span class="t nolsb" style="left:6.60px;top:280px;font-size:11.40px;color:#151515;">44</span><div class="hl" style="left:0;top:302.5px;width:25px;background:#c9c9c9"></div><span class="t nolsb" style="left:6.60px;top:320px;font-size:11.40px;color:#151515;">45</span><div class="hl" style="left:0;top:342.8px;width:25px;background:#c9c9c9"></div><span class="t nolsb" style="left:6.60px;top:370px;font-size:11.40px;color:#151515;">46</span><div class="hl" style="left:0;top:393.0px;width:25px;background:#c9c9c9"></div><span class="t nolsb" style="left:6.60px;top:410px;font-size:11.40px;color:#151515;">47</span><div class="hl" style="left:0;top:433.0px;width:25px;background:#c9c9c9"></div><span class="t nolsb" style="left:6.60px;top:476px;font-size:11.40px;color:#151515;">48</span><div class="hl" style="left:0;top:498.5px;width:25px;background:#c9c9c9"></div><span class="t nolsb" style="left:6.60px;top:516px;font-size:11.40px;color:#151515;">49</span><div class="hl" style="left:0;top:538.5px;width:25px;background:#c9c9c9"></div><span class="t nolsb" style="left:6.60px;top:556px;font-size:11.40px;color:#151515;">50</span><div class="hl" style="left:0;top:578.5px;width:25px;background:#c9c9c9"></div><span class="t nolsb" style="left:6.60px;top:596px;font-size:11.40px;color:#151515;">51</span><div class="hl" style="left:0;top:618.5px;width:25px;background:#c9c9c9"></div><span class="t nolsb" style="left:6.60px;top:636px;font-size:11.40px;color:#151515;">52</span><div class="hl" style="left:0;top:658.5px;width:25px;background:#c9c9c9"></div><span class="t nolsb" style="left:6.60px;top:686px;font-size:11.40px;color:#151515;">53</span><div class="a grid"></div><div class="sub" style="left:35.0px;top:303.0px;width:806.3px;height:40.0px"></div><div class="sub" style="left:951.0px;top:303.0px;width:466.0px;height:40.0px"></div><div class="hl" style="left:35.0px;top:262.5px;width:806.3px;background:#d4d4d4"></div><div class="hl" style="left:951.0px;top:262.5px;width:466.0px;background:#d4d4d4"></div><div class="hl" style="left:35.0px;top:302.5px;width:806.3px;background:#d4d4d4"></div><div class="hl" style="left:951.0px;top:302.5px;width:466.0px;background:#d4d4d4"></div><div class="hl" style="left:35.0px;top:342.8px;width:806.3px;background:#d4d4d4"></div><div class="hl" style="left:951.0px;top:342.8px;width:466.0px;background:#d4d4d4"></div><div class="vl" style="left:337.5px;top:224.0px;height:119.0px;background:#d4d4d4"></div><div class="vl" style="left:516.5px;top:224.0px;height:119.0px;background:#d4d4d4"></div><div class="vl" style="left:695.9px;top:224.0px;height:119.0px;background:#d4d4d4"></div><div class="vl" style="left:1284.0px;top:224.0px;height:119.0px;background:#d4d4d4"></div><div class="sub" style="left:35.0px;top:619.5px;width:806.3px;height:39.5px"></div><div class="sub" style="left:951.0px;top:619.5px;width:466.0px;height:39.5px"></div><div class="hl" style="left:35.0px;top:498.5px;width:806.3px;background:#d4d4d4"></div><div class="hl" style="left:951.0px;top:498.5px;width:466.0px;background:#d4d4d4"></div><div class="hl" style="left:35.0px;top:538.5px;width:806.3px;background:#d4d4d4"></div><div class="hl" style="left:951.0px;top:538.5px;width:466.0px;background:#d4d4d4"></div><div class="hl" style="left:35.0px;top:578.8px;width:806.3px;background:#d4d4d4"></div><div class="hl" style="left:951.0px;top:578.8px;width:466.0px;background:#d4d4d4"></div><div class="hl" style="left:35.0px;top:619.0px;width:806.3px;background:#d4d4d4"></div><div class="hl" style="left:951.0px;top:619.0px;width:466.0px;background:#d4d4d4"></div><div class="hl" style="left:35.0px;top:658.8px;width:806.3px;background:#d4d4d4"></div><div class="hl" style="left:951.0px;top:658.8px;width:466.0px;background:#d4d4d4"></div><div class="vl" style="left:337.5px;top:499.0px;height:160.0px;background:#d4d4d4"></div><div class="vl" style="left:516.5px;top:499.0px;height:160.0px;background:#d4d4d4"></div><div class="vl" style="left:695.9px;top:499.0px;height:160.0px;background:#d4d4d4"></div><div class="vl" style="left:1284.0px;top:499.0px;height:160.0px;background:#d4d4d4"></div><div class="hl" style="left:35.0px;top:433.2px;width:806.3px;background:#8aa9c4"></div><div class="hl" style="left:951.0px;top:433.2px;width:466.0px;background:#8aa9c4"></div><svg style="left:836.50px;top:338.50px" width="5" height="5" viewBox="0 0 5 5"><path d="M4 0.4 V4 H0.4" fill="none" stroke="#3b3b9c" stroke-width="1.9"/></svg><svg style="left:836.50px;top:654.50px" width="5" height="5" viewBox="0 0 5 5"><path d="M4 0.4 V4 H0.4" fill="none" stroke="#3b3b9c" stroke-width="1.9"/></svg><span class="t" style="left:47.10px;top:229px;font-size:14.00px;transform:scaleX(1.030);transform-origin:0 0;color:#575757;letter-spacing:0.733px;">Жизнь</span><span class="t" style="left:47.20px;top:310px;font-size:15.90px;transform:scaleX(1.035);transform-origin:0 0;font-weight:700;color:#474747;letter-spacing:0.319px;">Промежуточный итог</span><span class="t" style="left:749.74px;top:229px;font-size:14.00px;transform:scaleX(1.030);transform-origin:0 0;color:#575757;letter-spacing:-0.327px;">0,00 ₽</span><span class="t" style="left:749.74px;top:269px;font-size:14.00px;transform:scaleX(1.030);transform-origin:0 0;color:#575757;letter-spacing:-0.327px;">0,00 ₽</span><span class="t" style="left:749.43px;top:309px;font-size:14.00px;transform:scaleX(1.030);transform-origin:0 0;font-weight:700;color:#474747;letter-spacing:-0.242px;">0,00 ₽</span><span class="t" style="left:962.32px;top:229px;font-size:14.00px;transform:scaleX(1.030);transform-origin:0 0;color:#575757;letter-spacing:0.316px;">Местные</span><span class="t" style="left:962.89px;top:269px;font-size:14.00px;transform:scaleX(1.030);transform-origin:0 0;color:#575757;letter-spacing:0.238px;">Другое</span><span class="t" style="left:963.40px;top:310px;font-size:15.90px;transform:scaleX(1.035);transform-origin:0 0;font-weight:700;color:#474747;letter-spacing:0.313px;">Промежуточный итог</span><span class="t" style="left:48.29px;top:401px;font-size:22.60px;font-weight:700;color:#5b9bd5;letter-spacing:0.092px;">Еда</span><span class="t" style="left:964.36px;top:399px;font-size:23.00px;font-weight:700;color:#5b9bd5;letter-spacing:0.584px;">Сбережения и инвестиции</span><span class="t" style="left:352.53px;top:441px;font-size:15.90px;transform:scaleX(1.035);transform-origin:0 0;font-weight:700;color:#474747;letter-spacing:-0.048px;">Запланированные</span><span class="t" style="left:392.32px;top:466px;font-size:15.90px;transform:scaleX(1.035);transform-origin:0 0;font-weight:700;color:#474747;letter-spacing:0.168px;">расходы</span><span class="t" style="left:553.13px;top:441px;font-size:15.90px;transform:scaleX(1.035);transform-origin:0 0;font-weight:700;color:#474747;letter-spacing:0.187px;">Фактические</span><span class="t" style="left:570.32px;top:466px;font-size:15.90px;transform:scaleX(1.035);transform-origin:0 0;font-weight:700;color:#474747;letter-spacing:0.184px;">расходы</span><span class="t" style="left:735.10px;top:453px;font-size:15.90px;transform:scaleX(1.035);transform-origin:0 0;font-weight:700;color:#474747;">Разница</span><div class="a" style="left:1284.5px;top:440px;width:132.5px;height:55px;overflow:hidden"><span class="t" style="left:9.93px;top:1px;font-size:15.90px;transform:scaleX(1.035);transform-origin:0 0;font-weight:700;color:#474747;letter-spacing:-0.048px;">Запланированные</span><span class="t" style="left:49.82px;top:26px;font-size:15.90px;transform:scaleX(1.035);transform-origin:0 0;font-weight:700;color:#474747;letter-spacing:0.072px;">расходы</span></div><span class="t" style="left:46.23px;top:505px;font-size:14.00px;transform:scaleX(1.030);transform-origin:0 0;color:#575757;letter-spacing:0.292px;">Продукты</span><span class="t" style="left:46.12px;top:545px;font-size:14.00px;transform:scaleX(1.030);transform-origin:0 0;color:#575757;letter-spacing:0.138px;">Рестораны</span><span class="t" style="left:46.59px;top:585px;font-size:14.00px;transform:scaleX(1.030);transform-origin:0 0;color:#575757;letter-spacing:0.297px;">Другое</span><span class="t" style="left:47.20px;top:625px;font-size:15.90px;transform:scaleX(1.035);transform-origin:0 0;font-weight:700;color:#474747;letter-spacing:0.319px;">Промежуточный итог</span><span class="t" style="left:749.74px;top:505px;font-size:14.00px;transform:scaleX(1.030);transform-origin:0 0;color:#575757;letter-spacing:-0.327px;">0,00 ₽</span><span class="t" style="left:749.74px;top:545px;font-size:14.00px;transform:scaleX(1.030);transform-origin:0 0;color:#575757;letter-spacing:-0.327px;">0,00 ₽</span><span class="t" style="left:749.74px;top:585px;font-size:14.00px;transform:scaleX(1.030);transform-origin:0 0;color:#575757;letter-spacing:-0.327px;">0,00 ₽</span><span class="t" style="left:749.43px;top:625px;font-size:14.00px;transform:scaleX(1.030);transform-origin:0 0;font-weight:700;color:#474747;letter-spacing:-0.242px;">0,00 ₽</span><span class="t" style="left:962.03px;top:505px;font-size:14.00px;transform:scaleX(1.030);transform-origin:0 0;color:#575757;letter-spacing:0.424px;">Пенсионный счет</span><span class="t" style="left:962.02px;top:545px;font-size:14.00px;transform:scaleX(1.030);transform-origin:0 0;color:#575757;letter-spacing:0.438px;">Инвестиционный счет</span><span class="t" style="left:962.89px;top:585px;font-size:14.00px;transform:scaleX(1.030);transform-origin:0 0;color:#575757;letter-spacing:0.238px;">Другое</span><span class="t" style="left:963.40px;top:625px;font-size:15.90px;transform:scaleX(1.035);transform-origin:0 0;font-weight:700;color:#474747;letter-spacing:0.313px;">Промежуточный итог</span><div class="a" style="left:31px;top:255px;width:183px;height:129px;background:#ffffe1;border:1px solid #767676"></div><span class="t tt" style="left:37.70px;top:252px;font-size:11.80px;color:#4a4a4a;letter-spacing:-0.020px;">Составьте на этом листе</span><span class="t tt" style="left:38.24px;top:267px;font-size:11.80px;color:#4a4a4a;letter-spacing:0.072px;">личный бюджет на месяц. В</span><span class="t tt" style="left:38.18px;top:282px;font-size:11.80px;color:#4a4a4a;letter-spacing:0.024px;">данном столбце представлены</span><span class="t tt" style="left:37.48px;top:297px;font-size:11.80px;color:#4a4a4a;letter-spacing:0.230px;">полезные инструкции по</span><span class="t tt" style="left:37.48px;top:311px;font-size:11.80px;color:#4a4a4a;letter-spacing:0.186px;">использованию этого листа.</span><span class="t tt" style="left:37.33px;top:326px;font-size:11.80px;color:#4a4a4a;letter-spacing:-0.027px;">Нажмите клавишу СТРЕЛКА</span><span class="t tt" style="left:37.33px;top:341px;font-size:11.80px;color:#4a4a4a;letter-spacing:0.183px;">ВНИЗ, чтобы приступить.</span><div class="a" style="left:1416px;top:223px;width:1px;height:485px;background:#9b9b9b"></div><div class="a" style="left:1420px;top:224px;width:15px;height:469px;background:#dadada"></div><div class="sbtn" style="left:1420px;top:209px;width:15px;height:15px;border-color:#8f8f8f"></div><svg style="left:1424.00px;top:214.00px" width="7" height="4.5" viewBox="0 0 7 4.5"><path d="M0 4.2 H7 L3.5 0 Z" fill="#777"/></svg><div class="sbtn" style="left:1420px;top:467px;width:15px;height:69px;border-color:#7d7d7d"></div><div class="sbtn" style="left:1420px;top:693px;width:15px;height:14px;border-color:#8f8f8f"></div><svg style="left:1424.00px;top:698.00px" width="7" height="4.5" viewBox="0 0 7 4.5"><path d="M0 0 H7 L3.5 4.2 Z" fill="#777"/></svg><div class="a sheettabs"></div><svg style="left:27.50px;top:717.00px" width="5" height="8" viewBox="0 0 5 8"><path d="M4.6 0.4 V7.6 L0.4 4 Z" fill="#c2c2c2"/></svg><svg style="left:55.00px;top:717.00px" width="5" height="8" viewBox="0 0 5 8"><path d="M0.4 0.4 V7.6 L4.6 4 Z" fill="#c2c2c2"/></svg><div class="a" style="left:100px;top:710px;width:1px;height:21px;background:#c6c6c6"></div><div class="a" style="left:103px;top:710px;width:67px;height:22px;background:#375623"></div><span class="t" style="left:112.47px;top:706px;font-size:12.60px;color:#fff;letter-spacing:0.334px;">Начало</span><div class="a" style="left:172px;top:707px;width:192px;height:25px;background:linear-gradient(#fff,#fbfbfc 35%,#d3dae7 90%,#dde2ea);border-left:1px solid #9b9b9b;border-right:1px solid #9b9b9b;border-bottom:2px solid #217346"></div><div class="a" style="left:176px;top:732px;width:184px;height:2px;background:linear-gradient(#dfe3e6,#e6e6e6)"></div><span class="t" style="left:183.85px;top:706px;font-size:12.40px;font-weight:700;color:#1f7246;letter-spacing:0.446px;">Личный бюджет на месяц</span><svg style="left:397.00px;top:712.50px" width="16" height="16" viewBox="0 0 16 16"><circle cx="8" cy="8" r="7.1" fill="#f3f3f3" stroke="#6a6a6a" stroke-width="1.1"/><path d="M4.4 8 H11.6 M8 4.4 V11.6" stroke="#5a5a5a" stroke-width="1.4"/></svg><svg style="left:863.30px;top:715.60px" width="2" height="11" viewBox="0 0 2 11"><circle cx="1" cy="1" r="0.9" fill="#9a9a9a"/><circle cx="1" cy="5.2" r="0.9" fill="#9a9a9a"/><circle cx="1" cy="9.4" r="0.9" fill="#9a9a9a"/></svg><div class="a" style="left:880px;top:714px;width:537px;height:15px;background:#dadada"></div><div class="sbtn" style="left:880px;top:714px;width:15px;height:15px"></div><svg style="left:885.00px;top:718.00px" width="4.5" height="7" viewBox="0 0 4.5 7"><path d="M4.2 0 V7 L0 3.5 Z" fill="#606060"/></svg><div class="sbtn" style="left:895px;top:714px;width:368px;height:15px"></div><div class="sbtn" style="left:1402px;top:714px;width:15px;height:15px"></div><svg style="left:1407.70px;top:718.00px" width="4.5" height="7" viewBox="0 0 4.5 7"><path d="M0 0 V7 L4.2 3.5 Z" fill="#606060"/></svg><div class="a status"></div><span class="t" style="left:6.05px;top:732px;font-size:11.60px;color:#444;letter-spacing:0.425px;">Готово</span><div class="a" style="left:1125px;top:736px;width:38.5px;height:21px;background:#d0d0d0"></div><svg style="left:1136.80px;top:739.00px" width="14" height="14" viewBox="0 0 14 14"><rect x="0.6" y="0.6" width="12.8" height="12.8" fill="none" stroke="#444" stroke-width="1.1"/><path d="M0.6 4.9 H13.4 M0.6 9.2 H13.4 M4.9 0.6 V13.4 M9.2 0.6 V13.4" stroke="#444" stroke-width="1"/></svg><svg style="left:1176.80px;top:739.00px" width="14" height="14" viewBox="0 0 14 14"><rect x="0.6" y="0.6" width="12.8" height="12.8" fill="none" stroke="#444" stroke-width="1.1"/><rect x="3.4" y="3.4" width="7.2" height="7.2" fill="none" stroke="#444" stroke-width="1"/><path d="M5 5.8 H9 M5 8 H9" stroke="#444" stroke-width="0.9"/></svg><svg style="left:1217.00px;top:739.00px" width="14" height="14" viewBox="0 0 14 14"><rect x="0.6" y="0.6" width="12.8" height="12.8" fill="none" stroke="#444" stroke-width="1.1"/><path d="M5 0.6 V8 H13.4 M9.4 0.6 V8" fill="none" stroke="#444" stroke-width="1"/></svg><div class="a" style="left:1250.3px;top:745.5px;width:7.6px;height:1.2px;background:#555"></div><div class="a" style="left:1264px;top:745.6px;width:100px;height:1px;background:#777"></div><div class="a" style="left:1310.8px;top:740.5px;width:5.4px;height:11.5px;background:#737373"></div><svg style="left:1367.80px;top:742.00px" width="8" height="8" viewBox="0 0 8 8"><path d="M0 4 H8 M4 0 V8" stroke="#555" stroke-width="1.15"/></svg><span class="t" style="left:1389.13px;top:731px;font-size:11.40px;color:#444;letter-spacing:-0.259px;">100 %</span><div class="a bottomstrip"></div></div></body></html>
